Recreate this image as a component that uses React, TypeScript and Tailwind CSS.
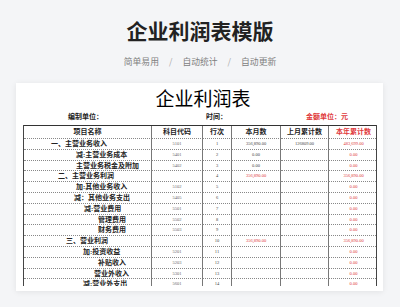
import React from "react";

type Row = {
  name: string;
  pl: number;
  code: string;
  n: number;
  m: string;
  mRed?: boolean;
  last: string;
  y: string;
};

const rows: Row[] = [
  { name: "一、主营业务收入", pl: 27, code: "5101", n: 1, m: "356,890.00", last: "126809.00", y: "483,699.00" },
  { name: "减:主营业务成本", pl: 52, code: "5401", n: 2, m: "0.00", last: "", y: "0.00" },
  { name: "主营业务税金及附加", pl: 52, code: "5402", n: 3, m: "0.00", last: "", y: "0.00" },
  { name: "二、主营业务利润", pl: 34, code: "", n: 4, m: "356,890.00", mRed: true, last: "", y: "356,890.00" },
  { name: "加:其他业务收入", pl: 52, code: "5102", n: 5, m: "", last: "", y: "0.00" },
  { name: "减：其他业务支出", pl: 50, code: "5405", n: 6, m: "", last: "", y: "0.00" },
  { name: "减:营业费用", pl: 60, code: "5501", n: 7, m: "", last: "", y: "0.00" },
  { name: "管理费用", pl: 74, code: "5502", n: 8, m: "", last: "", y: "0.00" },
  { name: "财务费用", pl: 74, code: "5503", n: 9, m: "", last: "", y: "0.00" },
  { name: "三、营业利润", pl: 42, code: "", n: 10, m: "356,890.00", mRed: true, last: "", y: "356,890.00" },
  { name: "加:投资收益", pl: 59, code: "5201", n: 11, m: "", last: "", y: "0.00" },
  { name: "补贴收入", pl: 74, code: "5203", n: 12, m: "", last: "", y: "0.00" },
  { name: "营业外收入", pl: 70, code: "5301", n: 13, m: "", last: "", y: "0.00" },
  { name: "减:营业外支出", pl: 59, code: "5601", n: 14, m: "", last: "", y: "0.00" },
];

const serif = { fontFamily: '"Liberation Serif", "Noto Sans CJK SC", serif' };
const solidR = { borderRightStyle: "solid" as const };

export default function App() {
  return (
    <div
      className="w-[400px] h-[307px] bg-[#f4f5f7] overflow-hidden flex flex-col items-center"
      style={{ fontFamily: '"Noto Sans CJK SC", "Noto Sans", sans-serif' }}
    >
      <div className="mt-[16px] h-[28px] leading-[28px] text-[21px] font-bold text-[#222]">
        企业利润表模版
      </div>
      <div className="mt-[10px] h-[16px] leading-[16px] text-[8.8px] text-[#808080] flex items-center gap-[10px]">
        <span>简单易用</span>
        <span className="text-[#aaa]">/</span>
        <span>自动统计</span>
        <span className="text-[#aaa]">/</span>
        <span>自动更新</span>
      </div>
      <div
        className="mt-[13px] w-[367px] h-[208px] bg-white shadow-[0_1px_6px_rgba(0,0,0,0.08)] self-start ml-[16px] flex flex-col pl-[7px] pr-[6px]"
        style={serif}
      >
        <div className="mt-[6px] h-[22px] leading-[22px] text-[19px] text-black text-center pl-[6px]">企业利润表</div>
        <div className="h-[10px] leading-[10px] text-[7px] font-bold flex mt-[1px]">
          <span className="ml-[45px] w-[138px] text-[#222]">编制单位：</span>
          <span className="w-[100px] text-[#222]">时间：</span>
          <span className="text-[#e0393b]">金额单位：元</span>
        </div>
        <div className="mt-[3px] w-[354px] h-[161px] overflow-hidden border-x border-[#444]">
          <div className="grid grid-cols-[128px_51px_29px_49px_48px_49px] border-t border-[#333]">
            {["项目名称", "科目代码", "行次", "本月数", "上月累计数", "本年累计数"].map((h, i) => (
              <div
                key={h}
                className={`h-[13px] leading-[12px] text-[7px] font-bold text-center border-b border-dotted border-[#888] ${
                  i < 5 ? "border-r border-r-[#777]" : ""
                } ${i === 5 ? "text-[#e0393b]" : "text-[#222]"}`}
                style={i < 5 ? solidR : undefined}
              >
                {h}
              </div>
            ))}
            {rows.map((r) => (
              <React.Fragment key={r.n}>
                <div
                  className="h-[10.8px] leading-[10px] text-[7px] font-bold text-[#222] border-b border-dotted border-[#888] border-r border-r-[#777] whitespace-nowrap"
                  style={{ paddingLeft: r.pl, borderRightStyle: "solid" }}
                >
                  {r.name}
                </div>
                <div
                  className="h-[10.8px] leading-[10px] text-[4.5px] text-[#666] text-center border-b border-dotted border-[#888] border-r border-r-[#777]"
                  style={solidR}
                >
                  {r.code}
                </div>
                <div
                  className="h-[10.8px] leading-[10px] text-[4.5px] text-[#444] text-center border-b border-dotted border-[#888] border-r border-r-[#777]"
                  style={solidR}
                >
                  {r.n}
                </div>
                <div
                  className={`h-[10.8px] leading-[10px] text-[4.5px] text-center border-b border-dotted border-[#888] border-r border-r-[#777] ${
                    r.mRed ? "text-[#e0393b]" : "text-[#444]"
                  }`}
                  style={solidR}
                >
                  {r.m}
                </div>
                <div
                  className="h-[10.8px] leading-[10px] text-[4.5px] text-[#444] text-center border-b border-dotted border-[#888] border-r border-r-[#777]"
                  style={solidR}
                >
                  {r.last}
                </div>
                <div className="h-[10.8px] leading-[10px] text-[4.5px] text-[#e0393b] text-center border-b border-dotted border-[#888]">
                  {r.y}
                </div>
              </React.Fragment>
            ))}
          </div>
        </div>
      </div>
    </div>
  );
}
